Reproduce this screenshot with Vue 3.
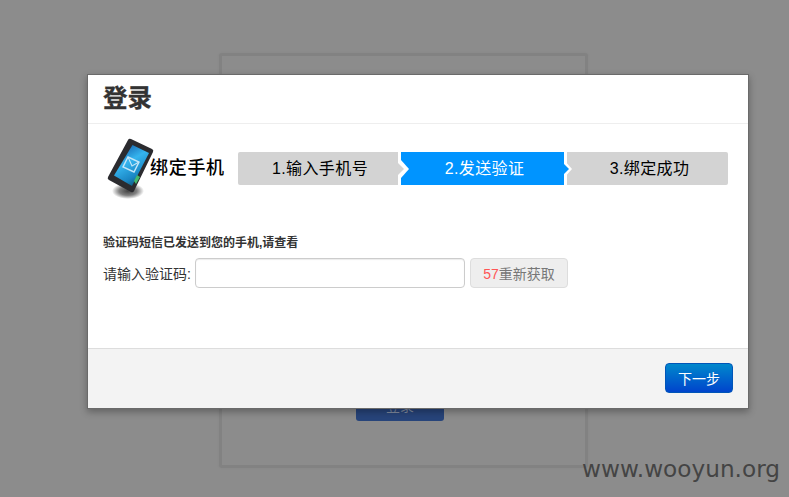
<script setup>
const steps = [
  { label: '1.输入手机号', cls: 'first' },
  { label: '2.发送验证', cls: 'active' },
  { label: '3.绑定成功', cls: 'last' }
]
</script>

<template>
  <div class="page">
    <div class="back-card">
      <div class="back-btn"><span>登录</span></div>
    </div>
    <div class="watermark">www.wooyun.org</div>
    <div class="modal">
      <div class="head"><h3>登录</h3></div>
      <div class="body">
        <div class="bind-row">
          <svg class="phone" width="50" height="64" viewBox="0 0 50 64">
            <defs>
              <linearGradient id="scr" x1="0.1" y1="0" x2="0.6" y2="1">
                <stop offset="0" stop-color="#0c4fa0" />
                <stop offset="0.45" stop-color="#35b4ee" />
                <stop offset="0.8" stop-color="#1a86c4" />
                <stop offset="1" stop-color="#0f5a78" />
              </linearGradient>
              <radialGradient id="shd">
                <stop offset="0" stop-color="#444" />
                <stop offset="0.55" stop-color="#808080" />
                <stop offset="1" stop-color="#fff" />
              </radialGradient>
            </defs>
            <ellipse cx="22" cy="55" rx="16" ry="8" fill="url(#shd)" />
            <path d="M25 3 L46 13 Q48 14 47 16 L28 55 Q27 57 25 56 L3 44 Q1 43 2 41 L22 4 Q23 2 25 3 Z" fill="#2b2b2f" />
            <path d="M26.5 9 L43 17 L26 50 L8 39.5 Z" fill="url(#scr)" />
            <path d="M22 21 L33 26 L28 36 L17 31 Z" fill="none" stroke="#c4e6f8" stroke-width="1.4" />
            <path d="M22 21 L26 30 L33 26" fill="none" stroke="#c4e6f8" stroke-width="1.1" />
            <path d="M28 45 L31 39 L34 41 L30 48 Z" fill="#43b86e" />
          </svg>
          <span class="bind-title">绑定手机</span>
          <div class="steps">
            <div v-for="s in steps" :key="s.label" class="step" :class="s.cls">{{ s.label }}</div>
          </div>
        </div>
        <p class="hint">验证码短信已发送到您的手机,请查看</p>
        <div class="form-row">
          <label for="code">请输入验证码:</label>
          <input id="code" class="code" type="text" />
          <button class="resend" type="button"><em>57</em>重新获取</button>
        </div>
      </div>
      <div class="foot">
        <button class="next" type="button">下一步</button>
      </div>
    </div>
  </div>
</template>

<style>
html, body { margin: 0; background: #8c8c8c; }
</style>

<style scoped>
.page {
  position: relative;
  width: 789px;
  height: 497px;
  overflow: hidden;
  background: #8c8c8c;
  font-family: "Liberation Sans", "Noto Sans CJK SC", sans-serif;
}
.back-card {
  box-sizing: border-box;
  width: 369px;
  height: 415px;
  margin: 53px 0 0 219px;
  border: 3px solid #828282;
  border-radius: 3px;
  box-shadow: 0 0 2px #848484;
  display: flex;
  justify-content: center;
  align-items: flex-end;
  padding-bottom: 44px;
  float: left;
}
.back-btn {
  width: 88px;
  height: 30px;
  background: #27447a;
  border-radius: 3px;
  color: #7f8a9f;
  font-size: 14px;
  text-align: center;
  line-height: 30px;
  margin-right: 7px;
}
.watermark {
  position: absolute;
  right: 9px;
  top: 453px;
  font-family: "DejaVu Sans", sans-serif;
  font-size: 23.2px;
  line-height: 32px;
  color: #444;
}
.modal {
  position: absolute;
  left: 87px;
  top: 74px;
  width: 660px;
  height: 333px;
  background: #fff;
  border: 1px solid #6a6a6a;
  box-shadow: 0 3px 7px rgba(0, 0, 0, 0.3);
  display: flex;
  flex-direction: column;
}
.head {
  height: 49px;
  box-sizing: border-box;
  border-bottom: 1px solid #eee;
  padding: 6px 15px 0;
}
h3 {
  margin: 0;
  font-size: 24.5px;
  line-height: 35px;
  font-weight: 700;
  color: #333;
  -webkit-text-stroke: 0.3px #333;
}
.body { flex: 1; padding: 0 0 0 15px; }
.bind-row {
  display: flex;
  align-items: flex-start;
  height: 78px;
}
.phone { flex: none; margin: 12px -6px 0 3px; }
.bind-title {
  margin: 32px 0 0;
  width: 88px;
  flex: none;
  font-size: 18px;
  letter-spacing: 0.7px;
  font-weight: 500;
  line-height: 24px;
  color: #000;
  white-space: nowrap;
}
.steps {
  display: flex;
  gap: 3px;
  margin-top: 28px;
}
.step {
  position: relative;
  box-sizing: border-box;
  height: 33px;
  line-height: 34px;
  padding-left: 4px;
  background: #d3d3d3;
  color: #000;
  font-size: 16px;
  letter-spacing: 0.4px;
  text-align: center;
}
.first { width: 160px; border-radius: 2px 0 0 2px; }
.active { width: 163px; background: #0094ff; color: #fff; }
.last { width: 161px; border-radius: 0 2px 2px 0; }
.first::after,
.active::after {
  content: "";
  position: absolute;
  top: 8px;
  width: 0;
  height: 0;
  border-style: solid;
  border-width: 9px 0 9px 8px;
  border-color: transparent transparent transparent #fff;
  z-index: 1;
}
.first::after { right: -11px; }
.active::after { right: -8px; }
.first::before,
.active::before {
  content: "";
  position: absolute;
  top: 11px;
  width: 0;
  height: 0;
  border-style: solid;
  border-width: 6px 0 6px 6px;
  z-index: 2;
}
.first::before { right: -6px; border-color: transparent transparent transparent #d3d3d3; }
.active::before { right: -5px; border-color: transparent transparent transparent #0094ff; }
.hint {
  margin: 32px 0 0;
  font-size: 12px;
  line-height: 18px;
  font-weight: 700;
  color: #333;
}
.form-row {
  display: flex;
  align-items: center;
  margin-top: 6px;
  height: 30px;
}
label {
  width: 92px;
  flex: none;
  font-size: 14px;
  color: #333;
  white-space: nowrap;
}
.code {
  box-sizing: border-box;
  width: 270px;
  height: 30px;
  padding: 4px 6px;
  background: #fff;
  border: 1px solid #ccc;
  border-radius: 4px;
  box-shadow: inset 0 1px 1px rgba(0, 0, 0, 0.08);
  outline: none;
}
.resend {
  box-sizing: border-box;
  width: 98px;
  height: 30px;
  margin-left: 5px;
  padding: 0;
  background: #eee;
  border: 1px solid #ddd;
  border-radius: 4px;
  font: 14px "Liberation Sans", "Noto Sans CJK SC", sans-serif;
  color: #777;
}
.resend em { font-style: normal; color: #f55; }
.foot {
  height: 60px;
  box-sizing: border-box;
  background: #f3f3f3;
  border-top: 1px solid #ddd;
  display: flex;
  justify-content: flex-end;
  align-items: flex-start;
  padding: 14px 15px 0 0;
}
.next {
  width: 68px;
  height: 30px;
  padding: 0;
  border: 1px solid #0055b8;
  border-radius: 4px;
  background: linear-gradient(#0088cc, #0044cc);
  color: #fff;
  font: 14px "Liberation Sans", "Noto Sans CJK SC", sans-serif;
}
</style>
